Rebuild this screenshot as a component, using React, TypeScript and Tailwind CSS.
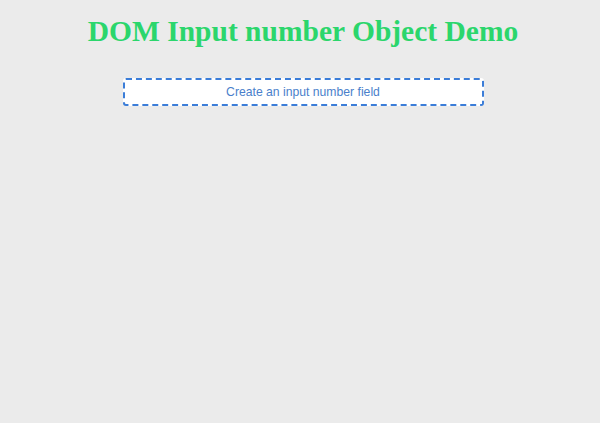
export default function App() {
  return (
    <div className="min-h-[423px] w-full bg-[#ebebeb] pl-[6px] pt-[14px]">
      <h1
        className="text-center text-[29.5px] font-bold leading-[34px] text-[#2bd66c]"
        style={{ fontFamily: '"Liberation Serif", "Times New Roman", serif' }}
      >
        DOM Input number Object Demo
      </h1>
      <div className="mt-[30px] flex justify-center">
        <button
          className="h-[28px] w-[361px] rounded-[3px] border-2 border-dashed border-[#3b7dd8] bg-white pt-[1px] text-[12.2px] text-[#4a7fcb]"
          style={{ fontFamily: '"Liberation Sans", Arial, sans-serif' }}
        >
          Create an input number field
        </button>
      </div>
    </div>
  );
}
